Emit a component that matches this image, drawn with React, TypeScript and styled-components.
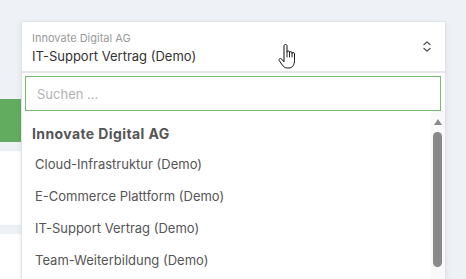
import React from "react";
import styled, { createGlobalStyle } from "styled-components";

const GlobalStyle = createGlobalStyle`
  html, body { margin: 0; padding: 0; }
  body {
    background: #eef2f7;
    font-family: Inter, "Noto Sans", "Liberation Sans", sans-serif;
    -webkit-font-smoothing: antialiased;
  }
  * { box-sizing: border-box; }
`;

const Page = styled.div`
  position: relative;
  width: 466px;
  height: 279px;
  overflow: hidden;
  background: #eef2f7;
`;

const Backdrop = styled.div`
  display: flex;
  flex-direction: column;
  width: 430px;
`;

const Band = styled.div<{ $h: number; $bg: string }>`
  height: ${(p) => p.$h}px;
  background: ${(p) => p.$bg};
`;

const Select = styled.div`
  position: absolute;
  top: 21px;
  left: 21px;
  width: 425px;
  height: 270px;
  display: flex;
  flex-direction: column;
  background: #fff;
  border: 1px solid #dfe2e6;
  box-shadow: 0 2px 6px rgba(0, 0, 0, 0.08);
`;

const Trigger = styled.div`
  height: 51px;
  flex: none;
  display: flex;
  align-items: center;
  padding: 0 14px 0 10px;
  border-bottom: 2px solid #e4e5e7;
`;

const TriggerText = styled.div`
  flex: 1;
  display: flex;
  flex-direction: column;
  gap: 3px;
  margin-top: 2px;
`;

const Label = styled.div`
  font-size: 11px;
  line-height: 14px;
  color: #9a9a9a;
`;

const Value = styled.div`
  font-size: 13px;
  line-height: 17px;
  color: #333;
`;

const Menu = styled.div`
  flex: 1;
  display: flex;
  flex-direction: column;
  padding: 3px 4px 0 3px;
  min-height: 0;
`;

const SearchInput = styled.input`
  flex: none;
  height: 35px;
  width: 100%;
  border: 1px solid #73bb6f;
  outline: none;
  padding: 0 11px;
  font-family: inherit;
  font-size: 13px;
  color: #333;
  &::placeholder { color: #b3b3b3; }
`;

const ListRow = styled.div`
  flex: 1;
  display: flex;
  min-height: 0;
  margin-right: -4px;
`;

const List = styled.div`
  flex: 1;
  display: flex;
  flex-direction: column;
  padding-top: 7px;
`;

const GroupHeader = styled.div`
  height: 30px;
  display: flex;
  align-items: center;
  padding-left: 7px;
  font-size: 14px;
  font-weight: 700;
  letter-spacing: 0.4px;
  color: #555;
`;

const Option = styled.div`
  height: 32px;
  flex: none;
  display: flex;
  align-items: center;
  padding-left: 10px;
  font-size: 13px;
  color: #555;
`;

const Scrollbar = styled.div`
  width: 15px;
  flex: none;
  display: flex;
  flex-direction: column;
  align-items: center;
  padding-top: 8px;
  background: #f9f9f9;
`;

const ArrowUp = styled.div`
  width: 0;
  height: 0;
  border-left: 4.5px solid transparent;
  border-right: 4.5px solid transparent;
  border-bottom: 6px solid #8a8a8a;
`;

const Thumb = styled.div`
  margin-top: 7px;
  width: 9px;
  height: 135px;
  flex: none;
  border-radius: 4.5px;
  background: #898989;
`;

const Cursor = styled.svg`
  position: absolute;
  left: 278px;
  top: 44px;
`;

const ChevronIcon = () => (
  <svg width="8" height="11" viewBox="0 0 8 11" fill="none" stroke="#555" strokeWidth="1.3" strokeLinecap="round" strokeLinejoin="round">
    <path d="M1 3.5 L4 1 L7 3.5" />
    <path d="M1 7.5 L4 10 L7 7.5" />
  </svg>
);

const options = [
  "Cloud-Infrastruktur (Demo)",
  "E-Commerce Plattform (Demo)",
  "IT-Support Vertrag (Demo)",
  "Team-Weiterbildung (Demo)",
];

export default function App() {
  return (
    <>
      <GlobalStyle />
      <Page>
        <Backdrop>
          <Band $h={99} $bg="#eef2f7" />
          <Band $h={43} $bg="#62ac5f" />
          <Band $h={9} $bg="#edf1f6" />
          <Band $h={74} $bg="#ffffff" />
          <Band $h={9} $bg="#edf0f4" />
          <Band $h={45} $bg="#ffffff" />
        </Backdrop>
        <Select>
          <Trigger>
            <TriggerText>
              <Label>Innovate Digital AG</Label>
              <Value>IT-Support Vertrag (Demo)</Value>
            </TriggerText>
            <ChevronIcon />
          </Trigger>
          <Menu>
            <SearchInput placeholder="Suchen ..." />
            <ListRow>
              <List>
                <GroupHeader>Innovate Digital AG</GroupHeader>
                {options.map((o) => (
                  <Option key={o}>{o}</Option>
                ))}
              </List>
              <Scrollbar>
                <ArrowUp />
                <Thumb />
              </Scrollbar>
            </ListRow>
          </Menu>
        </Select>
        <Cursor width="20" height="26" viewBox="0 0 20 26">
          <path
            d="M6 1.8 C6 1 6.7 0.5 7.5 0.5 C8.3 0.5 9 1 9 1.8 L9 8.2 C9 7.4 9.6 7 10.2 7 C10.9 7 11.5 7.4 11.5 8.2 L11.5 8.8 C11.5 8 12.1 7.6 12.8 7.6 C13.5 7.6 14 8 14 8.8 L14 9.6 C14 8.9 14.6 8.5 15.2 8.5 C15.9 8.5 16.5 8.9 16.5 9.6 L16.5 16.5 C16.5 20.5 14.5 24 10.8 24 L9.3 24 C6.8 24 5.7 22.8 4.2 20.8 L1.3 16.7 C0.8 16 1 15.1 1.6 14.7 C2.3 14.3 3.1 14.5 3.6 15.1 L6 17.8 Z"
            fill="#fff"
            stroke="#111"
            strokeWidth="1"
            strokeLinejoin="round"
          />
          <path d="M9 8.5 L9 13 M11.5 9 L11.5 13 M14 9.6 L14 13" stroke="#111" strokeWidth="0.9" strokeLinecap="round" />
        </Cursor>
      </Page>
    </>
  );
}
